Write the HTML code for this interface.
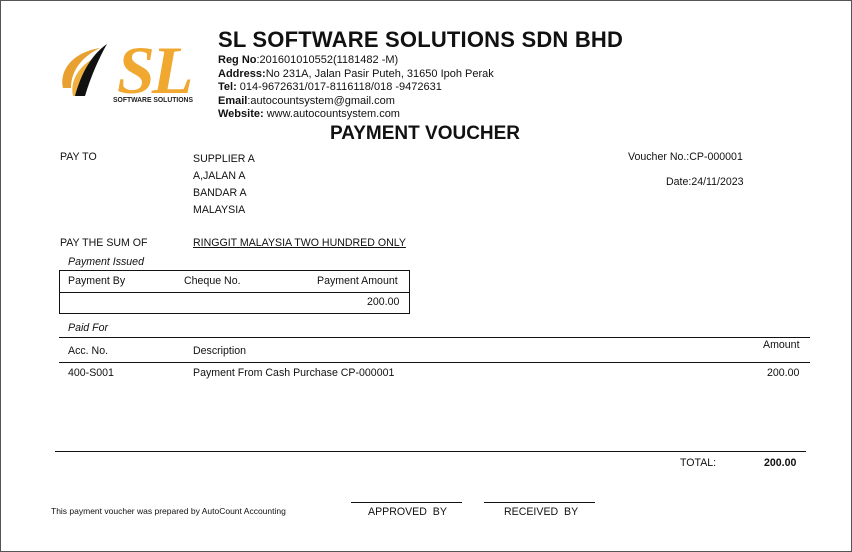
<!DOCTYPE html>
<html><head><meta charset="utf-8"><style>
*{margin:0;padding:0;box-sizing:border-box}
body{width:852px;height:552px;background:#fff;position:relative;overflow:hidden;font-family:"Liberation Sans",sans-serif;color:#111}
.frame{position:absolute;left:0;top:0;width:852px;height:552px;border:1px solid #555}
.a{position:absolute;white-space:nowrap;font-size:10.6px}
.h{position:absolute;background:#111;height:1px}
.v{position:absolute;background:#111;width:1px}
.hd{font-size:11px;line-height:13.5px}
</style></head><body>
<div class="frame"></div>
<svg style="position:absolute;left:55px;top:30px" width="155" height="80" viewBox="0 0 155 80">
<path d="M8 58 C 4 38, 20 22, 45 18 C 28 26, 16 40, 16 58 Z" fill="#e8a030"/>
<path d="M18 66 C 14 48, 28 32, 44 26 C 32 38, 26 50, 26 66 Z" fill="#f0b040"/>
<path d="M20 66 C 26 44, 36 25, 52 14 C 44 28, 36 46, 30 66 Z" fill="#111"/>
<text x="62" y="63" font-family="Liberation Serif" font-weight="bold" font-style="italic" font-size="68" fill="#f0a830" letter-spacing="-3">SL</text>
<text x="58" y="72" font-family="Liberation Sans" font-weight="bold" font-size="7" fill="#222" textLength="80" lengthAdjust="spacingAndGlyphs">SOFTWARE SOLUTIONS</text>
</svg>
<div class="a" style="left:218px;top:27px;font-size:22px;font-weight:bold;letter-spacing:0.2px">SL SOFTWARE SOLUTIONS SDN BHD</div>
<div class="a hd" style="left:218px;top:54px"><b>Reg No</b>:201601010552(1181482 -M)<br><b>Address:</b>No 231A, Jalan Pasir Puteh, 31650 Ipoh Perak<br><b>Tel:</b> 014-9672631/017-8116118/018 -9472631<br><b>Email</b>:autocountsystem@gmail.com<br><b>Website:</b> www.autocountsystem.com</div>
<div class="a" style="left:330px;top:123px;font-size:19px;font-weight:bold">PAYMENT VOUCHER</div>
<div class="a" style="left:60px;top:151px">PAY TO</div>
<div class="a" style="left:193px;top:151px;line-height:17px">SUPPLIER A<br>A,JALAN A<br>BANDAR A<br>MALAYSIA</div>
<div class="a" style="left:628px;top:151px">Voucher No.:CP-000001</div>
<div class="a" style="left:666px;top:176px">Date:24/11/2023</div>
<div class="a" style="left:60px;top:237px">PAY THE SUM OF</div>
<div class="a" style="left:193px;top:237px;text-decoration:underline">RINGGIT MALAYSIA TWO HUNDRED ONLY</div>
<div class="a" style="left:68px;top:256px;font-style:italic">Payment Issued</div>
<div class="h" style="left:59px;top:270px;width:351px"></div>
<div class="h" style="left:59px;top:292px;width:351px"></div>
<div class="h" style="left:59px;top:313px;width:351px"></div>
<div class="v" style="left:59px;top:270px;height:44px"></div>
<div class="v" style="left:409px;top:270px;height:44px"></div>
<div class="a" style="left:68px;top:275px">Payment By</div>
<div class="a" style="left:184px;top:275px">Cheque No.</div>
<div class="a" style="left:317px;top:275px">Payment Amount</div>
<div class="a" style="left:367px;top:296px">200.00</div>
<div class="a" style="left:68px;top:322px;font-style:italic">Paid For</div>
<div class="h" style="left:59px;top:337px;width:751px"></div>
<div class="a" style="left:68px;top:345px">Acc. No.</div>
<div class="a" style="left:193px;top:345px">Description</div>
<div class="a" style="left:763px;top:339px">Amount</div>
<div class="h" style="left:59px;top:362px;width:751px"></div>
<div class="a" style="left:68px;top:367px">400-S001</div>
<div class="a" style="left:193px;top:367px">Payment From Cash Purchase CP-000001</div>
<div class="a" style="left:767px;top:367px">200.00</div>
<div class="h" style="left:55px;top:451px;width:751px"></div>
<div class="a" style="left:680px;top:457px">TOTAL:</div>
<div class="a" style="left:764px;top:457px;font-weight:bold">200.00</div>
<div class="a" style="left:51px;top:506px;font-size:8.5px">This payment voucher was prepared by AutoCount Accounting</div>
<div class="h" style="left:351px;top:502px;width:111px"></div>
<div class="h" style="left:484px;top:502px;width:111px"></div>
<div class="a" style="left:368px;top:506px">APPROVED &nbsp;BY</div>
<div class="a" style="left:504px;top:506px">RECEIVED &nbsp;BY</div>
</body></html>
